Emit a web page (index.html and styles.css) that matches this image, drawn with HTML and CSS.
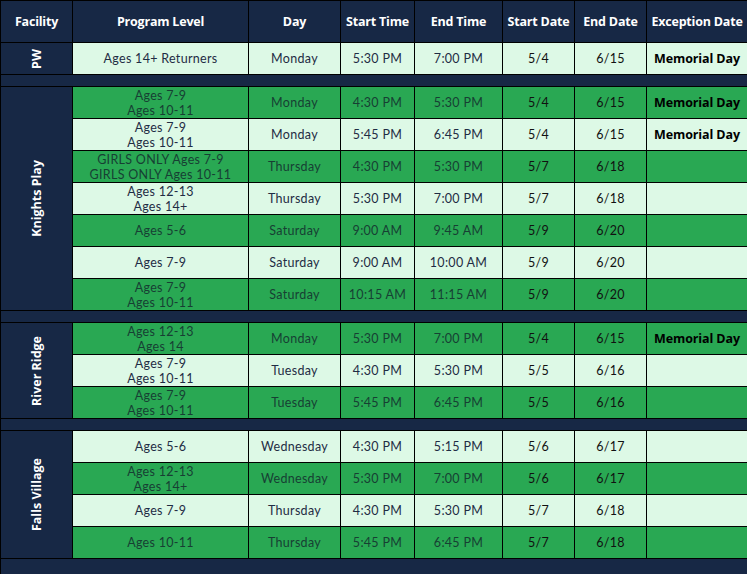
FILE: index.html
```html
<!DOCTYPE html>
<html>
<head>
<meta charset="utf-8">
<link rel="stylesheet" href="styles.css">
</head>
<body>
<table class="sched">
  <colgroup>
    <col class="c-fac"><col class="c-prog"><col class="c-day"><col class="c-st"><col class="c-et"><col class="c-sd"><col class="c-ed"><col class="c-ex">
  </colgroup>
  <thead>
    <tr class="head">
      <th>Facility</th><th>Program Level</th><th>Day</th><th>Start Time</th><th>End Time</th><th>Start Date</th><th>End Date</th><th>Exception Date</th>
    </tr>
  </thead>
  <tbody>
    <tr class="row light">
      <td class="fac" rowspan="1"><div class="vt">PW</div></td>
      <td>Ages 14+ Returners</td><td>Monday</td><td>5:30 PM</td><td>7:00 PM</td><td class="dt">5/4</td><td class="dt">6/15</td><td class="ex">Memorial Day</td>
    </tr>
    <tr class="sep"><td colspan="8"></td></tr>

    <tr class="row green">
      <td class="fac" rowspan="7"><div class="vt">Knights Play</div></td>
      <td>Ages 7-9<br>Ages 10-11</td><td>Monday</td><td>4:30 PM</td><td>5:30 PM</td><td class="dt">5/4</td><td class="dt">6/15</td><td class="ex">Memorial Day</td>
    </tr>
    <tr class="row light">
      <td>Ages 7-9<br>Ages 10-11</td><td>Monday</td><td>5:45 PM</td><td>6:45 PM</td><td class="dt">5/4</td><td class="dt">6/15</td><td class="ex">Memorial Day</td>
    </tr>
    <tr class="row green">
      <td>GIRLS ONLY Ages 7-9<br>GIRLS ONLY Ages 10-11</td><td>Thursday</td><td>4:30 PM</td><td>5:30 PM</td><td class="dt">5/7</td><td class="dt">6/18</td><td class="ex"></td>
    </tr>
    <tr class="row light">
      <td>Ages 12-13<br>Ages 14+</td><td>Thursday</td><td>5:30 PM</td><td>7:00 PM</td><td class="dt">5/7</td><td class="dt">6/18</td><td class="ex"></td>
    </tr>
    <tr class="row green">
      <td>Ages 5-6</td><td>Saturday</td><td>9:00 AM</td><td>9:45 AM</td><td class="dt">5/9</td><td class="dt">6/20</td><td class="ex"></td>
    </tr>
    <tr class="row light">
      <td>Ages 7-9</td><td>Saturday</td><td>9:00 AM</td><td>10:00 AM</td><td class="dt">5/9</td><td class="dt">6/20</td><td class="ex"></td>
    </tr>
    <tr class="row green">
      <td>Ages 7-9<br>Ages 10-11</td><td>Saturday</td><td>10:15 AM</td><td>11:15 AM</td><td class="dt">5/9</td><td class="dt">6/20</td><td class="ex"></td>
    </tr>
    <tr class="sep"><td colspan="8"></td></tr>

    <tr class="row green">
      <td class="fac" rowspan="3"><div class="vt">River Ridge</div></td>
      <td>Ages 12-13<br>Ages 14</td><td>Monday</td><td>5:30 PM</td><td>7:00 PM</td><td class="dt">5/4</td><td class="dt">6/15</td><td class="ex">Memorial Day</td>
    </tr>
    <tr class="row light">
      <td>Ages 7-9<br>Ages 10-11</td><td>Tuesday</td><td>4:30 PM</td><td>5:30 PM</td><td class="dt">5/5</td><td class="dt">6/16</td><td class="ex"></td>
    </tr>
    <tr class="row green">
      <td>Ages 7-9<br>Ages 10-11</td><td>Tuesday</td><td>5:45 PM</td><td>6:45 PM</td><td class="dt">5/5</td><td class="dt">6/16</td><td class="ex"></td>
    </tr>
    <tr class="sep"><td colspan="8"></td></tr>

    <tr class="row light">
      <td class="fac" rowspan="4"><div class="vt">Falls Village</div></td>
      <td>Ages 5-6</td><td>Wednesday</td><td>4:30 PM</td><td>5:15 PM</td><td class="dt">5/6</td><td class="dt">6/17</td><td class="ex"></td>
    </tr>
    <tr class="row green">
      <td>Ages 12-13<br>Ages 14+</td><td>Wednesday</td><td>5:30 PM</td><td>7:00 PM</td><td class="dt">5/6</td><td class="dt">6/17</td><td class="ex"></td>
    </tr>
    <tr class="row light">
      <td>Ages 7-9</td><td>Thursday</td><td>4:30 PM</td><td>5:30 PM</td><td class="dt">5/7</td><td class="dt">6/18</td><td class="ex"></td>
    </tr>
    <tr class="row green">
      <td>Ages 10-11</td><td>Thursday</td><td>5:45 PM</td><td>6:45 PM</td><td class="dt">5/7</td><td class="dt">6/18</td><td class="ex"></td>
    </tr>
    <tr class="sep last"><td colspan="8"></td></tr>
  </tbody>
</table>
</body>
</html>
```
FILE: styles.css
```css
html, body {
  margin: 0;
  padding: 0;
  background: #172845;
}
body {
  width: 747px;
  height: 574px;
  overflow: hidden;
  font-family: "Open Sans", "Liberation Sans", sans-serif;
}
.sched {
  border-collapse: collapse;
  table-layout: fixed;
  width: 747px;
}
.c-fac { width: 72px; }
.c-prog { width: 176px; }
.c-day { width: 92px; }
.c-st { width: 74px; }
.c-et { width: 88px; }
.c-sd { width: 72px; }
.c-ed { width: 72px; }
.c-ex { width: 101px; }

.sched th, .sched td {
  border: 1px solid #000;
  padding: 0;
  text-align: center;
  vertical-align: middle;
}
.head th {
  height: 41px;
  background: #172845;
  color: #fff;
  font-weight: 700;
  font-size: 12.5px;
  letter-spacing: -0.2px;
}
.row td {
  height: 31px;
  font-family: "Lato", "Open Sans", sans-serif;
  font-size: 12.5px;
  letter-spacing: 0.3px;
  line-height: 15px;
}
.light td {
  background: #ddf9e6;
  color: #1f2c44;
}
.green td {
  background: #29a853;
  color: #173f33;
}
.sched td.dt { color: #111; }
.sched td.ex {
  font-family: "Open Sans", sans-serif;
  color: #000;
  font-weight: 700;
  letter-spacing: -0.1px;
}
.sched td.fac {
  background: #172845;
  color: #fff;
}
.vt {
  writing-mode: vertical-rl;
  transform: rotate(180deg);
  margin: 0 auto;
  font-family: "Open Sans", sans-serif;
  font-weight: 700;
  font-size: 12.5px;
  letter-spacing: 0;
  white-space: nowrap;
}
.sep td {
  height: 11px;
  background: #172845;
}
.sep.last td { height: 20px; }
```
